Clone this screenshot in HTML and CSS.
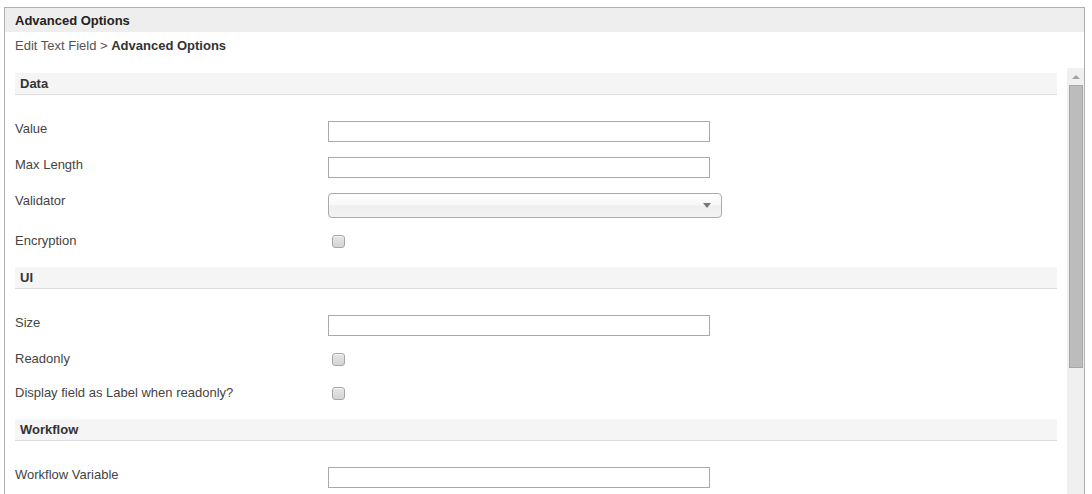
FILE: index.html
```html
<!DOCTYPE html>
<html lang="en">
<head>
    <meta charset="UTF-8">
    <meta name="viewport" content="width=device-width, initial-scale=1.0">
    <title>Advanced Options</title>
    <link rel="stylesheet" href="styles.css">
</head>
<body>

<div class="dialog">
    <div class="dialog-title">Advanced Options</div>

    <div class="breadcrumb">Edit Text Field &gt; <strong>Advanced Options</strong></div>

    <div class="panel">
        <form class="panel-content">
            <!-- Data -->
            <div class="section-header">Data</div>
            <div class="section-body">
                <div class="row">
                    <label for="value">Value</label>
                    <input type="text" id="value">
                </div>
                <div class="row">
                    <label for="maxlength">Max Length</label>
                    <input type="text" id="maxlength">
                </div>
                <div class="row">
                    <label for="validator">Validator</label>
                    <span class="select-wrap">
                        <select id="validator">
                            <option value=""></option>
                        </select>
                    </span>
                </div>
                <div class="row check-row">
                    <label for="encryption">Encryption</label>
                    <input type="checkbox" id="encryption">
                </div>
            </div>

            <!-- UI -->
            <div class="section-header">UI</div>
            <div class="section-body">
                <div class="row">
                    <label for="size">Size</label>
                    <input type="text" id="size">
                </div>
                <div class="row check-row">
                    <label for="readonly">Readonly</label>
                    <input type="checkbox" id="readonly">
                </div>
                <div class="row check-row">
                    <label for="readonlyLabel">Display field as Label when readonly?</label>
                    <input type="checkbox" id="readonlyLabel">
                </div>
            </div>

            <!-- Workflow -->
            <div class="section-header">Workflow</div>
            <div class="section-body">
                <div class="row">
                    <label for="workflowVariable">Workflow Variable</label>
                    <input type="text" id="workflowVariable">
                </div>
            </div>
        </form>

        <div class="scrollbar">
            <div class="scroll-up"></div>
            <div class="scroll-thumb"></div>
        </div>
    </div>
</div>

</body>
</html>
```

FILE: styles.css
```css
* {
    margin: 0;
    padding: 0;
    box-sizing: border-box;
}

html, body {
    overflow: hidden;
}

body {
    font-family: 'Liberation Sans', Arial, sans-serif;
    font-size: 13px;
    line-height: 15px;
    color: #444;
    background-color: #ffffff;
}

.dialog {
    margin: 7px 0 0 4px;
    width: 1081px;
    height: 487px;
    border: 1px solid #b0b0b0;
    border-bottom: none;
    overflow: hidden;
}

.dialog-title {
    height: 24px;
    line-height: 25px;
    padding-left: 10px;
    background-color: #eeeeee;
    font-weight: bold;
    color: #222;
}

.breadcrumb {
    padding: 6px 10px 0;
    height: 36px;
    color: #555;
}

.breadcrumb strong {
    color: #333;
}

.panel {
    display: flex;
    height: 426px;
    overflow: hidden;
}

.panel-content {
    flex: 1;
    padding: 5px 10px 0;
}

.section-header {
    height: 22px;
    line-height: 21px;
    padding-left: 5px;
    background-color: #f5f5f5;
    border-bottom: 1px solid #dddddd;
    font-weight: bold;
    color: #333;
}

.section-body {
    padding-top: 26px;
}

.row {
    display: flex;
    align-items: flex-start;
    margin-bottom: 15px;
}

.row label {
    width: 313px;
    flex-shrink: 0;
}

input[type="text"] {
    width: 382px;
    height: 21px;
    border: 1px solid #aaaaaa;
    padding: 0 4px;
    font: inherit;
    color: #333;
}

.select-wrap {
    position: relative;
    display: block;
}

.select-wrap::after {
    content: "";
    position: absolute;
    top: 10px;
    right: 11px;
    border-left: 4px solid transparent;
    border-right: 4px solid transparent;
    border-top: 5px solid #777;
    pointer-events: none;
}

select {
    appearance: none;
    -webkit-appearance: none;
    width: 394px;
    height: 25px;
    border: 1px solid #aaaaaa;
    border-radius: 4px;
    background: linear-gradient(to bottom, #ffffff 0%, #f7f7f7 48%, #eeeeee 52%, #f3f3f3 100%);
    font: inherit;
}

input[type="checkbox"] {
    appearance: none;
    -webkit-appearance: none;
    width: 13px;
    height: 13px;
    margin: 2px 0 4px 4px;
    border: 1px solid #a8a8a8;
    border-radius: 3px;
    background: linear-gradient(to bottom, #e6e6e6, #d4d4d4);
    box-shadow: inset 0 1px 0 #f4f4f4;
}

.scrollbar {
    width: 17px;
    flex-shrink: 0;
    background-color: #f0f0f0;
    padding: 7px 1px 0 2px;
}

.scroll-up {
    width: 0;
    height: 0;
    margin: 0 0 6px 3px;
    border-left: 4px solid transparent;
    border-right: 4px solid transparent;
    border-bottom: 4px solid #a3a3a3;
}

.scroll-thumb {
    width: 14px;
    height: 283px;
    background-color: #bcbcbc;
    border: 1px solid #a6a6a6;
}
```
